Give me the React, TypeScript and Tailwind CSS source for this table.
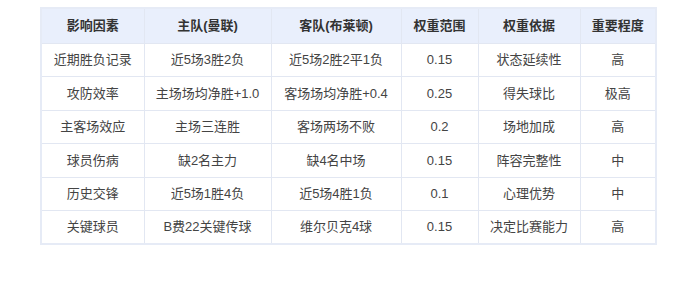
import React from "react";

const headers = ["影响因素", "主队(曼联)", "客队(布莱顿)", "权重范围", "权重依据", "重要程度"];
const rows = [
  ["近期胜负记录", "近5场3胜2负", "近5场2胜2平1负", "0.15", "状态延续性", "高"],
  ["攻防效率", "主场场均净胜+1.0", "客场场均净胜+0.4", "0.25", "得失球比", "极高"],
  ["主客场效应", "主场三连胜", "客场两场不败", "0.2", "场地加成", "高"],
  ["球员伤病", "缺2名主力", "缺4名中场", "0.15", "阵容完整性", "中"],
  ["历史交锋", "近5场1胜4负", "近5场4胜1负", "0.1", "心理优势", "中"],
  ["关键球员", "B费22关键传球", "维尔贝克4球", "0.15", "决定比赛能力", "高"],
];
const widths = ["w-[103px]", "w-[127px]", "w-[130px]", "w-[77px]", "w-[102px]", "w-[76px]"];

export default function App() {
  return (
    <div
      className="w-[699px] h-[306px] bg-white pt-[7px] pl-[40px]"
      style={{ fontFamily: '"Liberation Sans", "Noto Sans CJK SC", sans-serif' }}
    >
      <table className="border-collapse table-fixed w-[615px] text-[13px] border-2 border-[#e6ebf6]">
        <thead>
          <tr className="bg-[#e9effc] h-[35px]">
            {headers.map((h, i) => (
              <th
                key={i}
                className={`${widths[i]} border border-[#e2e7f2] font-bold text-[#333] text-center align-middle p-0`}
              >
                {h}
              </th>
            ))}
          </tr>
        </thead>
        <tbody>
          {rows.map((r, ri) => (
            <tr key={ri} className="h-[33.5px]">
              {r.map((c, ci) => (
                <td
                  key={ci}
                  className="border border-[#e2e7f2] text-[#444] text-center align-middle p-0"
                >
                  {c}
                </td>
              ))}
            </tr>
          ))}
        </tbody>
      </table>
    </div>
  );
}
